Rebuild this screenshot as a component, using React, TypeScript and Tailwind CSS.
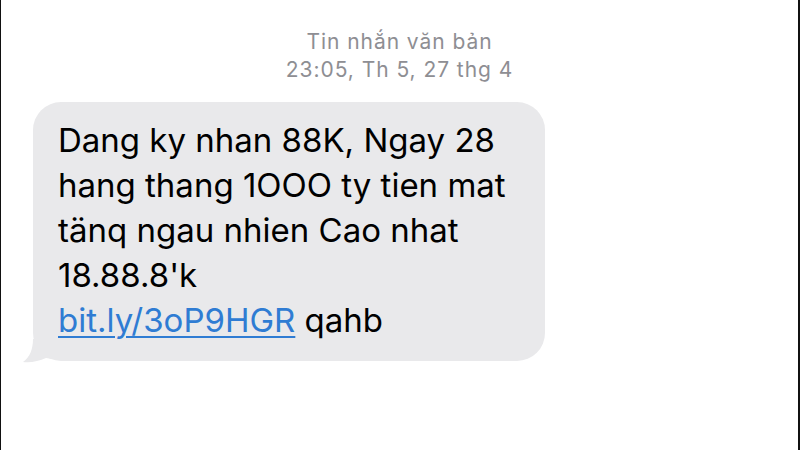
export default function App() {
  return (
    <div
      className="w-[800px] h-[450px] overflow-hidden bg-white border-l border-r-2 border-[#111] flex flex-col"
      style={{ fontFamily: "Inter, 'Liberation Sans', Arial, sans-serif" }}
    >
      <div className="pt-[28px] flex flex-col items-center text-[#8e8e93] text-[21px] leading-[28px] tracking-[0.95px]">
        <span>Tin nhắn văn bản</span>
        <span>23:05, Th 5, 27 thg 4</span>
      </div>
      <div className="pl-[32px] pt-[18px]">
        <div className="relative w-[512px]">
          <div className="rounded-[28px] bg-[#e9e9eb] pl-[25px] pr-[14px] pt-[16px] pb-[18px] text-[33px] leading-[45px] text-black">
            <p>Dang ky nhan 88K, Ngay 28</p>
            <p>hang thang 1OOO ty tien mat</p>
            <p>tänq ngau nhien Cao nhat</p>
            <p>18.88.8'k</p>
            <p>
              <span className="text-[#2f7cd3] underline decoration-[1.5px] underline-offset-[4px]">bit.ly/3oP9HGR</span> qahb
            </p>
          </div>
          <svg className="absolute left-[-11px] bottom-[-2px]" width="30" height="24" viewBox="0 0 30 24">
            <path d="M11 0 C11 10 8 18 1 23 C9 24 17 22 24 19 L30 20 L30 0 Z" fill="#e9e9eb" />
          </svg>
        </div>
      </div>
    </div>
  );
}
